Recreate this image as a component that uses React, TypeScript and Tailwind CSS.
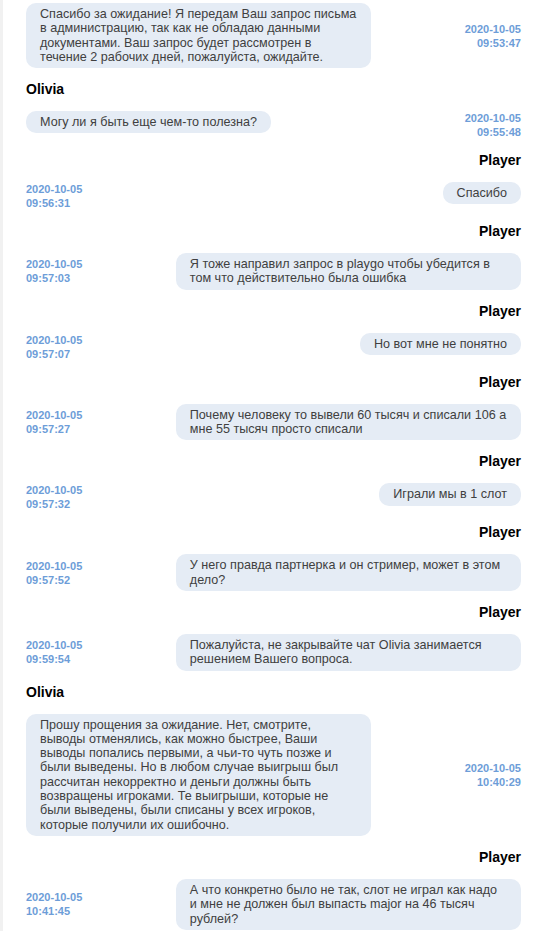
import React from "react";

type Msg = {
  id: number;
  from: "Olivia" | "Player";
  showName: boolean;
  text: string;
  date: string;
  time: string;
};

const messages: Msg[] = [
  {
    id: 1,
    from: "Olivia",
    showName: false,
    text: "Спасибо за ожидание! Я передам Ваш запрос письма в администрацию, так как не обладаю данными документами. Ваш запрос будет рассмотрен в течение 2 рабочих дней, пожалуйста, ожидайте.",
    date: "2020-10-05",
    time: "09:53:47",
  },
  {
    id: 2,
    from: "Olivia",
    showName: true,
    text: "Могу ли я быть еще чем-то полезна?",
    date: "2020-10-05",
    time: "09:55:48",
  },
  { id: 3, from: "Player", showName: true, text: "Спасибо", date: "2020-10-05", time: "09:56:31" },
  {
    id: 4,
    from: "Player",
    showName: true,
    text: "Я тоже направил запрос в playgo чтобы убедится в том что действительно была ошибка",
    date: "2020-10-05",
    time: "09:57:03",
  },
  { id: 5, from: "Player", showName: true, text: "Но вот мне не понятно", date: "2020-10-05", time: "09:57:07" },
  {
    id: 6,
    from: "Player",
    showName: true,
    text: "Почему человеку то вывели 60 тысяч и списали 106 а мне 55 тысяч просто списали",
    date: "2020-10-05",
    time: "09:57:27",
  },
  { id: 7, from: "Player", showName: true, text: "Играли мы в 1 слот", date: "2020-10-05", time: "09:57:32" },
  {
    id: 8,
    from: "Player",
    showName: true,
    text: "У него правда партнерка и он стример, может в этом дело?",
    date: "2020-10-05",
    time: "09:57:52",
  },
  {
    id: 9,
    from: "Player",
    showName: true,
    text: "Пожалуйста, не закрывайте чат Olivia занимается решением Вашего вопроса.",
    date: "2020-10-05",
    time: "09:59:54",
  },
  {
    id: 10,
    from: "Olivia",
    showName: true,
    text: "Прошу прощения за ожидание. Нет, смотрите, выводы отменялись, как можно быстрее, Ваши выводы попались первыми, а чьи-то чуть позже и были выведены. Но в любом случае выигрыш был рассчитан некорректно и деньги должны быть возвращены игроками. Те выигрыши, которые не были выведены, были списаны у всех игроков, которые получили их ошибочно.",
    date: "2020-10-05",
    time: "10:40:29",
  },
  {
    id: 11,
    from: "Player",
    showName: true,
    text: "А что конкретно было не так, слот не играл как надо и мне не должен был выпасть major на 46 тысяч рублей?",
    date: "2020-10-05",
    time: "10:41:45",
  },
];

function Stamp({ date, time, right }: { date: string; time: string; right: boolean }) {
  return (
    <div
      className={`self-center shrink-0 text-[11px] leading-[14px] font-bold text-[#6d9dd8] ${
        right ? "text-right" : "text-left"
      }`}
    >
      <div>{date}</div>
      <div>{time}</div>
    </div>
  );
}

function Bubble({ text }: { text: string }) {
  return (
    <div className="max-w-[345.2px] rounded-[10px] bg-[#e5ecf5] px-[14px] py-[4px] text-[12.6px] leading-[14.3px] text-[#404040]">
      {text}
    </div>
  );
}

export default function App() {
  return (
    <div className="flex min-h-screen bg-white font-['Liberation_Sans',Arial,sans-serif]">
      {/* left strip */}
      <div className="w-[3px] shrink-0 bg-[#f1f1f1]" />

      <div className="flex-1 pl-[23px] pr-[21px] pt-[3px]">
        {messages.map((m, i) => {
          const mine = m.from === "Player";
          return (
            <div key={m.id} className={i === 0 ? "" : "mt-[13px]"}>
              {m.showName && (
                <div
                  className={`mb-[14px] text-[14px] leading-[16px] font-bold text-black ${
                    mine ? "text-right" : "text-left"
                  }`}
                >
                  {m.from}
                </div>
              )}

              {mine ? (
                <div className="flex items-start justify-between gap-4">
                  <Stamp date={m.date} time={m.time} right={false} />
                  <Bubble text={m.text} />
                </div>
              ) : (
                <div className="flex items-start justify-between gap-4">
                  <Bubble text={m.text} />
                  <Stamp date={m.date} time={m.time} right={true} />
                </div>
              )}
            </div>
          );
        })}
      </div>
    </div>
  );
}
